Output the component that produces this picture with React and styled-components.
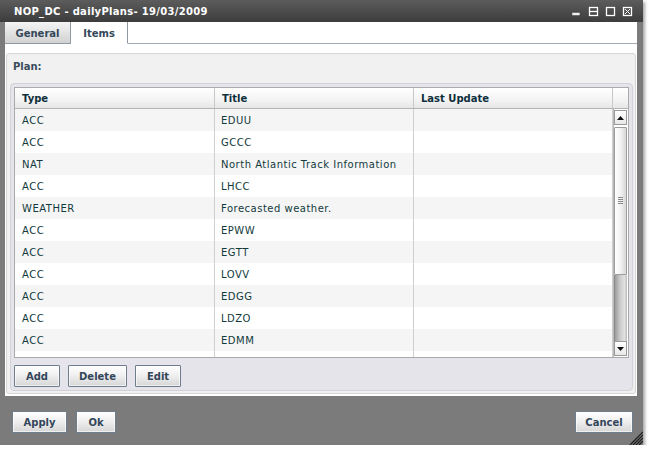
import React from "react";
import styled, { createGlobalStyle } from "styled-components";

const Global = createGlobalStyle`
  html, body { margin: 0; padding: 0; background: #ffffff; }
  body { font-family: "DejaVu Sans", Verdana, sans-serif; font-size: 10px; }
  * { box-sizing: border-box; }
`;

const Window = styled.div`
  width: 643px;
  height: 445px;
  background: #7b7b7b;
  display: flex;
  flex-direction: column;
  box-shadow: 2px 2px 3px rgba(0, 0, 0, 0.35);
`;

const TitleBar = styled.div`
  height: 22px;
  flex: none;
  display: flex;
  align-items: center;
  justify-content: space-between;
  padding: 0 10px 0 14px;
  background: linear-gradient(#5c5c5c, #3c3c3c);
`;

const Title = styled.div`
  color: #ffffff;
  font-weight: bold;
  font-size: 10px;
  letter-spacing: 0.3px;
`;

const WinButtons = styled.div`
  display: flex;
  gap: 6px;
  align-items: center;
`;

const Body = styled.div`
  height: 374px;
  margin: 0 6px 0 5px;
  background: #ffffff;
  display: flex;
  flex-direction: column;
`;

const TabStrip = styled.div`
  height: 22px;
  display: flex;
  flex: none;
`;

const Tab = styled.div`
  height: 22px;
  width: ${(p) => p.w}px;
  display: flex;
  align-items: center;
  justify-content: center;
  padding-top: 1px;
  font-weight: bold;
  font-size: 10px;
  color: #34485a;
  background: ${(p) => (p.active ? "#ffffff" : "linear-gradient(#f4f4f4, #d2d2d2)")};
  border-right: 1px solid #8d9aa6;
  border-bottom: ${(p) => (p.active ? "1px solid #ffffff" : "1px solid #8d9aa6")};
`;

const TabFill = styled.div`
  flex: 1;
  border-bottom: 1px solid #a3acb4;
`;

const Panel = styled.div`
  margin: 9px 1px 3px 1px;
  flex: 1;
  background: #f1f1f1;
  border: 1px solid #d6d6d6;
  border-radius: 3px;
  padding: 6px 2px 2px 3px;
  display: flex;
  flex-direction: column;
`;

const Label = styled.div`
  font-weight: bold;
  color: #3a4b5c;
  font-size: 10px;
  padding-left: 3px;
  height: 13px;
  line-height: 13px;
  margin-bottom: 10px;
`;

const GridBox = styled.div`
  flex: 1;
  background: #e4e4ea;
  border: 1px solid #d2d2da;
  border-radius: 4px;
  padding: 3px;
  display: flex;
  flex-direction: column;
`;

const Grid = styled.div`
  height: 271px;
  border: 1px solid #aaaaaa;
  background: #ffffff;
  display: flex;
  flex-direction: column;
  overflow: hidden;
`;

const cols = "200px 199px 199px 1fr";

const HeaderRow = styled.div`
  display: grid;
  grid-template-columns: ${cols};
  height: 21px;
  flex: none;
  background: linear-gradient(#ffffff, #f3f3f3 60%, #e6e6e6);
  border-bottom: 1px solid #b4b4b4;
`;

const HeadCell = styled.div`
  font-weight: bold;
  color: #0e2f3b;
  font-size: 10px;
  padding-left: 7px;
  display: flex;
  align-items: center;
  border-right: ${(p) => (p.last ? "none" : "1px solid #c8c8c8")};
`;

const BodyArea = styled.div`
  flex: 1;
  display: flex;
  min-height: 0;
`;

const Rows = styled.div`
  width: 598px;
  display: flex;
  flex-direction: column;
  overflow: hidden;
`;

const Row = styled.div`
  display: grid;
  grid-template-columns: 200px 199px 199px;
  height: 22px;
  flex: none;
  background: ${(p) => (p.odd ? "#f5f5f5" : "#ffffff")};
`;

const Cell = styled.div`
  color: #123a3c;
  font-size: 10px;
  letter-spacing: 0.5px;
  padding-left: ${(p) => (p.first ? 7 : 6)}px;
  display: flex;
  align-items: center;
  border-right: 1px solid #cfcfcf;
  white-space: nowrap;
`;

const Scrollbar = styled.div`
  flex: 1;
  display: flex;
  flex-direction: column;
  border-left: 1px solid #b8b8b8;
  padding: 0 1px 0 0;
  background: #ffffff;
`;

const ArrowBtn = styled.div`
  height: 15px;
  flex: none;
  border: 1px solid #9a9a9a;
  background: linear-gradient(#ffffff, #e8e8e8);
  display: flex;
  align-items: center;
  justify-content: center;
  margin: ${(p) => (p.down ? "0 0 1px 0" : "1px 0 0 0")};
`;

const Thumb = styled.div`
  height: 148px;
  flex: none;
  margin-top: 2px;
  border: 1px solid #9c9c9c;
  border-radius: 1px;
  background: linear-gradient(to right, #ffffff, #f2f2f2 50%, #d8d8d8);
  display: flex;
  align-items: center;
  justify-content: center;
`;

const Grip = styled.div`
  width: 5px;
  height: 8px;
  background: repeating-linear-gradient(#8a8a8a 0 1px, transparent 1px 2px);
`;

const Track = styled.div`
  flex: 1;
  background: linear-gradient(to right, #9c9c9c, #c9c9c9 40%, #e2e2e2 80%, #b8b8b8);
  border-left: 1px solid #8c8c8c;
`;

const ButtonRow = styled.div`
  display: flex;
  gap: 8px;
  margin-top: 7px;
`;

const Button = styled.button`
  height: 22px;
  width: ${(p) => p.w}px;
  padding: 0;
  border: 1px solid #6e7e8e;
  border-radius: 1px;
  background: linear-gradient(#ffffff, #f0f0f0 45%, #d6d6d6);
  box-shadow: inset 0 0 0 1px rgba(255, 255, 255, 0.6);
  font-family: "DejaVu Sans", Verdana, sans-serif;
  font-weight: bold;
  font-size: 10px;
  color: #33465a;
`;

const Footer = styled.div`
  flex: 1;
  display: flex;
  align-items: flex-start;
  padding: 15px 10px 0 12px;
  gap: 9px;
  position: relative;
`;

const Spacer = styled.div`
  flex: 1;
`;

const GripCorner = styled.svg`
  position: absolute;
  right: 0;
  bottom: 0;
`;

const data = [
  ["ACC", "EDUU"],
  ["ACC", "GCCC"],
  ["NAT", "North Atlantic Track Information"],
  ["ACC", "LHCC"],
  ["WEATHER", "Forecasted weather."],
  ["ACC", "EPWW"],
  ["ACC", "EGTT"],
  ["ACC", "LOVV"],
  ["ACC", "EDGG"],
  ["ACC", "LDZO"],
  ["ACC", "EDMM"],
  ["", ""],
];

const Icon = ({ children }) => (
  <svg width="11" height="11" viewBox="0 0 11 11" fill="none" stroke="#ffffff" strokeWidth="1.3">
    {children}
  </svg>
);

export default function App() {
  return (
    <>
      <Global />
      <Window>
        <TitleBar>
          <Title>NOP_DC - dailyPlans- 19/03/2009</Title>
          <WinButtons>
            <Icon>
              <rect x="1.5" y="7" width="7" height="2" fill="#ffffff" stroke="#cccccc" strokeWidth="0.6" />
            </Icon>
            <Icon>
              <rect x="1.5" y="1.5" width="8" height="8" />
              <line x1="1.5" y1="5.5" x2="9.5" y2="5.5" />
            </Icon>
            <Icon>
              <rect x="1.5" y="1.5" width="8" height="8" />
            </Icon>
            <Icon>
              <rect x="1.5" y="1.5" width="8" height="8" />
              <line x1="3" y1="3" x2="8" y2="8" strokeWidth="1" />
              <line x1="8" y1="3" x2="3" y2="8" strokeWidth="1" />
            </Icon>
          </WinButtons>
        </TitleBar>
        <Body>
          <TabStrip>
            <Tab w={66}>General</Tab>
            <Tab w={57} active>
              Items
            </Tab>
            <TabFill />
          </TabStrip>
          <Panel>
            <Label>Plan:</Label>
            <GridBox>
              <Grid>
                <HeaderRow>
                  <HeadCell>Type</HeadCell>
                  <HeadCell>Title</HeadCell>
                  <HeadCell>Last Update</HeadCell>
                  <HeadCell last />
                </HeaderRow>
                <BodyArea>
                  <Rows>
                    {data.map((r, i) => (
                      <Row key={i} odd={i % 2 === 0}>
                        <Cell first>{r[0]}</Cell>
                        <Cell>{r[1]}</Cell>
                        <Cell />
                      </Row>
                    ))}
                  </Rows>
                  <Scrollbar>
                    <ArrowBtn>
                      <svg width="7" height="4" viewBox="0 0 7 4">
                        <path d="M0 4 L3.5 0 L7 4 Z" fill="#111" />
                      </svg>
                    </ArrowBtn>
                    <Thumb>
                      <Grip />
                    </Thumb>
                    <Track />
                    <ArrowBtn down>
                      <svg width="7" height="4" viewBox="0 0 7 4">
                        <path d="M0 0 L3.5 4 L7 0 Z" fill="#111" />
                      </svg>
                    </ArrowBtn>
                  </Scrollbar>
                </BodyArea>
              </Grid>
              <ButtonRow>
                <Button w={46}>Add</Button>
                <Button w={59}>Delete</Button>
                <Button w={46}>Edit</Button>
              </ButtonRow>
            </GridBox>
          </Panel>
        </Body>
        <Footer>
          <Button w={55}>Apply</Button>
          <Button w={40}>Ok</Button>
          <Spacer />
          <Button w={58}>Cancel</Button>
          <GripCorner width="16" height="15" viewBox="0 0 16 15">
            <g stroke="#1a1a1a" strokeWidth="1.2">
              <line x1="16" y1="2" x2="3" y2="15" />
              <line x1="16" y1="5" x2="6" y2="15" />
              <line x1="16" y1="8" x2="9" y2="15" />
              <line x1="16" y1="11" x2="12" y2="15" />
            </g>
          </GripCorner>
        </Footer>
      </Window>
    </>
  );
}
